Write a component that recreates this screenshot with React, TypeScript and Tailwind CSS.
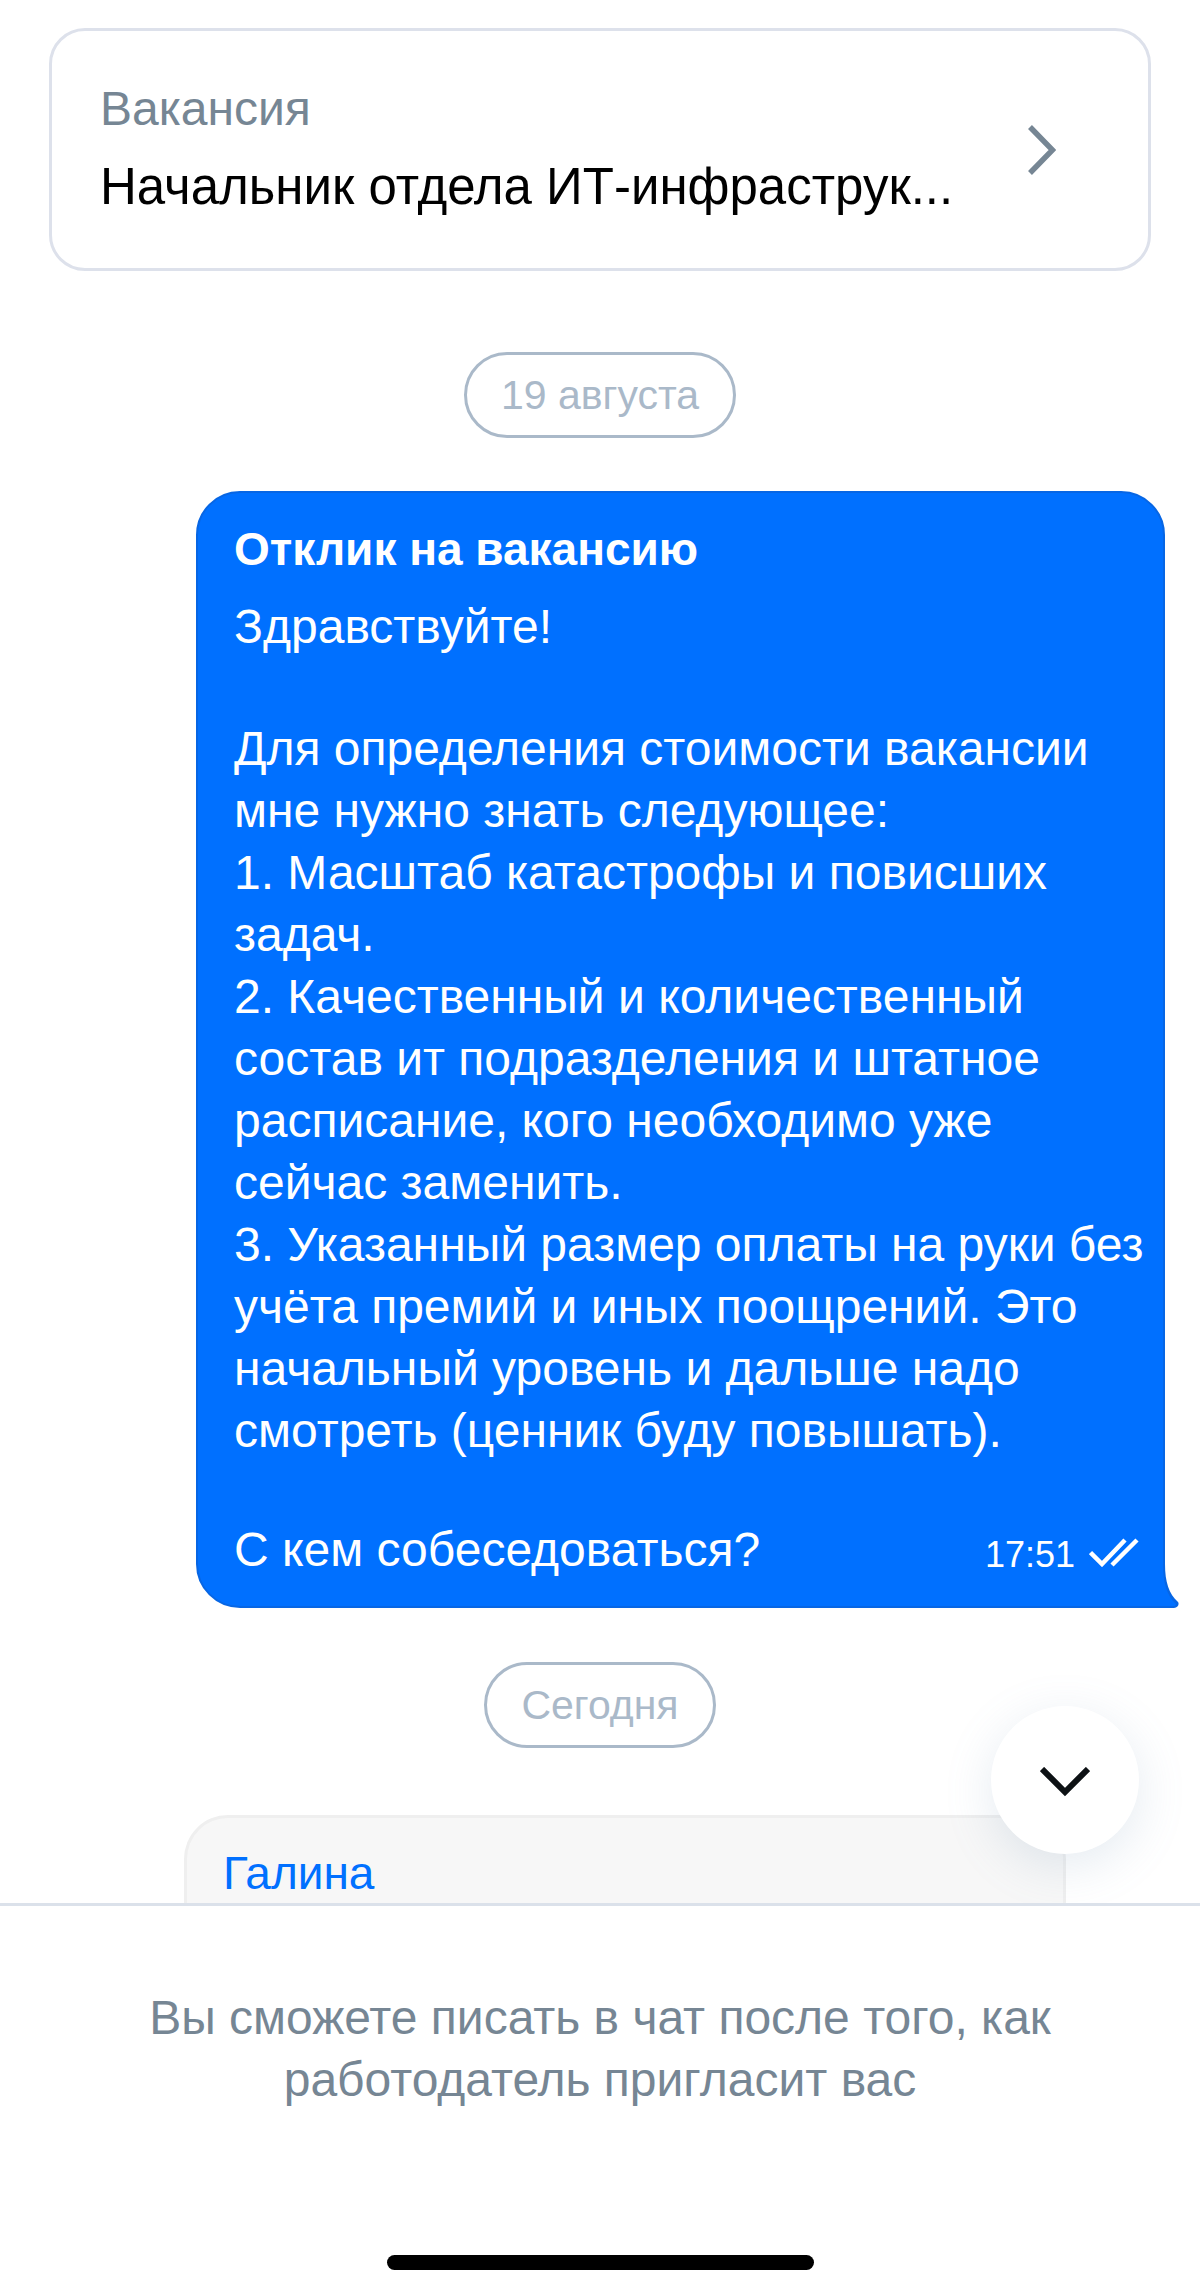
import React from "react";

const vacancyTitle = "Начальник отдела ИТ-инфраструк...";

// Текст отклика, переносы строк сохраняются
const replyText = `Для определения стоимости вакансии
мне нужно знать следующее:
1. Масштаб катастрофы и повисших
задач.
2. Качественный и количественный
состав ит подразделения и штатное
расписание, кого необходимо уже
сейчас заменить.
3. Указанный размер оплаты на руки без
учёта премий и иных поощрений. Это
начальный уровень и дальше надо
смотреть (ценник буду повышать).`;

function VacancyCard() {
  return (
    <a
      href="#vacancy"
      className="mx-[49px] mt-[28px] flex items-center justify-between rounded-[36px] border-[3px] border-[#dde1eb] pt-[47px] pr-[92px] pb-[47px] pl-[48px]"
    >
      <span className="flex flex-col gap-[12px] whitespace-nowrap">
        <span className="text-[48px] leading-[62px] text-[#768694]">Вакансия</span>
        <span className="text-[51px] leading-[69px] text-black">{vacancyTitle}</span>
      </span>
      <svg width="28" height="50" viewBox="0 0 28 50" fill="none" className="shrink-0">
        <path d="M2 2L24.5 25L2 48" stroke="#768694" strokeWidth="5.5" />
      </svg>
    </a>
  );
}

function DateBadge({ children }: { children: React.ReactNode }) {
  return (
    <div className="self-center rounded-full border-[3px] border-[#aab9c9] px-[34px] py-[12px] text-[41px] leading-[56px] text-[#aab9c9]">
      {children}
    </div>
  );
}

function OutgoingMessage() {
  return (
    <article className="relative mt-[53px] mr-[35px] ml-[196px] rounded-[44px] rounded-br-none border-2 border-[#0766e4] bg-[#0070ff] px-[36px] py-[25px] text-[48px] leading-[62px] whitespace-nowrap text-white">
      <h2 className="mb-[16px] text-[46px] font-bold">Отклик на вакансию</h2>
      <p>Здравствуйте!</p>
      <p className="mt-[60px] mb-[57px] whitespace-pre">{replyText}</p>
      <div className="flex items-end justify-between">
        <p>С кем собеседоваться?</p>
        <div className="-mr-[12px] flex items-baseline gap-[14px]">
          <time className="text-[36px] leading-[52px]">17:51</time>
          {/* Прочитано */}
          <svg width="50" height="29" viewBox="0 0 50 29" fill="none">
            <path d="M1.5 14.5L13 26L36 2M23 27L48 2" stroke="white" strokeWidth="4.5" />
          </svg>
        </div>
      </div>
      {/* Хвостик сообщения */}
      <svg
        width="18"
        height="44"
        viewBox="0 0 18 44"
        className="absolute -right-[16px] -bottom-[2px]"
      >
        <path d="M0 0H4C4 18 8 30 17 38C18.5 40 17 44 13 44H0Z" fill="#0766e4" />
        <path d="M0 0H2C2 19 6 32 15 40L14 42H0Z" fill="#0070ff" />
      </svg>
    </article>
  );
}

export default function App() {
  return (
    <main className="flex h-screen flex-col bg-white font-['Liberation_Sans',Arial,sans-serif]">
      <section className="relative flex min-h-0 flex-1 flex-col overflow-hidden">
        <VacancyCard />

        <div className="mt-[81px] flex flex-col">
          <DateBadge>19 августа</DateBadge>
        </div>
        <OutgoingMessage />
        <div className="mt-[54px] flex flex-col">
          <DateBadge>Сегодня</DateBadge>
        </div>

        {/* Входящее сообщение, нижняя часть скрыта панелью */}
        <article className="mt-[67px] mr-[134px] ml-[184px] shrink-0 rounded-t-[44px] border-[3px] border-b-0 border-[#efefef] bg-[#f7f7f7] px-[36px] pt-[24px] pb-[24px] text-[46px] leading-[62px] text-[#0070ff]">
          Галина
        </article>

        <button
          aria-label="Вниз"
          className="absolute right-[61px] bottom-[49px] flex size-[148px] items-center justify-center rounded-full bg-white pt-[4px] shadow-[0_12px_48px_rgba(112,144,176,0.18)]"
        >
          <svg width="50" height="30" viewBox="0 0 50 30" fill="none">
            <path d="M2 2L25 25L48 2" stroke="#0d1114" strokeWidth="6" />
          </svg>
        </button>
      </section>

      <footer className="flex flex-col items-center border-t-[3px] border-[#dbe1ea] pt-[81px] pb-[24px] text-center">
        <p className="text-[48px] leading-[62px] text-[#768694]">
          Вы сможете писать в чат после того, как
          <br />
          работодатель пригласит вас
        </p>
        <div className="mt-[144px] h-[15px] w-[427px] rounded-full bg-black" />
      </footer>
    </main>
  );
}
